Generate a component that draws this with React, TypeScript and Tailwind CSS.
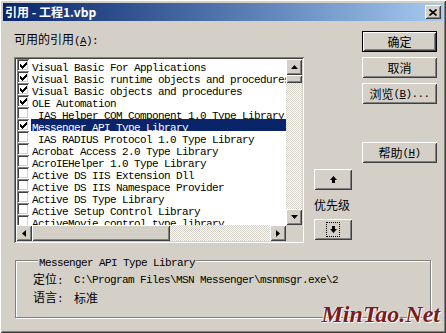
import type { ReactNode } from "react";

const raised =
  "shadow-[inset_1px_1px_#fff,inset_-1px_-1px_#404040,inset_2px_2px_#d4d0c8,inset_-2px_-2px_#808080]";
const sunken =
  "shadow-[inset_1px_1px_#808080,inset_-1px_-1px_#fff,inset_2px_2px_#404040,inset_-2px_-2px_#d4d0c8]";
const dither =
  "bg-[image:repeating-conic-gradient(#d4d0c8_0_25%,#fff_0_50%)] bg-[length:2px_2px]";

const refs = [
  { name: "Visual Basic For Applications", on: true },
  { name: "Visual Basic runtime objects and procedures", on: true },
  { name: "Visual Basic objects and procedures", on: true },
  { name: "OLE Automation", on: true },
  { name: " IAS Helper COM Component 1.0 Type Library", on: false },
  { name: "Messenger API Type Library", on: true, sel: true },
  { name: " IAS RADIUS Protocol 1.0 Type Library", on: false },
  { name: "Acrobat Access 2.0 Type Library", on: false },
  { name: "AcroIEHelper 1.0 Type Library", on: false },
  { name: "Active DS IIS Extension Dll", on: false },
  { name: "Active DS IIS Namespace Provider", on: false },
  { name: "Active DS Type Library", on: false },
  { name: "Active Setup Control Library", on: false },
  { name: "ActiveMovie control type library", on: false },
];

function Mono({ children, className = "" }: { children: ReactNode; className?: string }) {
  return (
    <span className={`whitespace-pre font-['Liberation_Mono',monospace] text-[11px] tracking-[-0.6px] ${className}`}>
      {children}
    </span>
  );
}

function Key({ k }: { k: string }) {
  return (
    <Mono>
      (<span className="underline underline-offset-[1px]">{k}</span>)
    </Mono>
  );
}

function Arrow({ dir }: { dir: "up" | "down" | "left" | "right" }) {
  const pts = {
    up: "3.5,0 7,4 0,4",
    down: "0,0 7,0 3.5,4",
    left: "4,0 4,7 0,3.5",
    right: "0,0 4,3.5 0,7",
  }[dir];
  const v = dir === "up" || dir === "down";
  return (
    <svg width={v ? 7 : 4} height={v ? 4 : 7} viewBox={v ? "0 0 7 4" : "0 0 4 7"}>
      <polygon points={pts} fill="#000" />
    </svg>
  );
}

function ScrollBtn({ dir }: { dir: "up" | "down" | "left" | "right" }) {
  return (
    <div className={`flex h-[16px] w-[16px] shrink-0 items-center justify-center bg-[#d4d0c8] ${raised}`}>
      <Arrow dir={dir} />
    </div>
  );
}

function CheckBox({ on }: { on: boolean }) {
  return (
    <div className={`ml-[1px] flex h-[12px] w-[12px] shrink-0 items-center justify-center bg-white ${sunken}`}>
      {on && (
        <svg width="7" height="7" viewBox="0 0 7 7">
          <path d="M0 2h1v1h1v1h1v-1h1v-1h1v-1h1v-1h1v3h-1v1h-1v1h-1v1h-1v1h-1v-1h-1v-1h-1z" fill="#000" />
        </svg>
      )}
    </div>
  );
}

function Button({ children, isDefault = false }: { children: ReactNode; isDefault?: boolean }) {
  return (
    <div
      className={`flex h-[21px] w-[75px] items-center justify-center bg-[#d4d0c8] ${
        isDefault ? "border border-black" : ""
      } ${raised}`}
    >
      {children}
    </div>
  );
}

function BigArrow({ down = false }: { down?: boolean }) {
  return (
    <svg width="7" height="7" viewBox="0 0 7 7" className={down ? "rotate-180" : ""}>
      <polygon points="3.5,0 7,4 5,4 5,7 2,7 2,4 0,4" fill="#000" />
    </svg>
  );
}

export default function App() {
  return (
    <div
      className={`relative h-[333px] w-[446px] overflow-hidden bg-[#d4d0c8] p-[3px] font-['Noto_Sans_CJK_SC',sans-serif] text-[12px] leading-[12px] text-black ${raised}`}
    >
      {/* 标题栏 */}
      <div className="flex h-[18px] items-center justify-between bg-linear-to-r from-[#0a246a] to-[#a6caf0] px-[2px]">
        <span className="font-bold text-white">引用 - 工程1.vbp</span>
        <div className={`flex h-[14px] w-[16px] items-center justify-center bg-[#d4d0c8] ${raised}`}>
          <svg width="8" height="7" viewBox="0 0 8 7">
            <path d="M0.5 0.5 7.5 6.5 M7.5 0.5 0.5 6.5" stroke="#000" strokeWidth="1.6" />
          </svg>
        </div>
      </div>

      <div className="flex pl-[11px]">
        {/* 引用列表 */}
        <div className="flex w-[290px] flex-col">
          <div className="mt-[12px] h-[12px]">
            可用的引用<Key k="A" />
            <Mono>:</Mono>
          </div>
          <div className={`mt-[12px] h-[186px] w-[290px] bg-white p-[2px] ${sunken}`}>
            <div className="flex h-full">
              <div className="flex w-[270px] flex-col">
                <div className="h-[166px] overflow-hidden">
                  {refs.map((r) => (
                    <div key={r.name} className="flex h-[12px] items-start">
                      <CheckBox on={r.on} />
                      <div
                        className={`ml-[2px] h-[12px] flex-1 pl-[1px] leading-[13px] ${
                          r.sel ? "bg-[#0a246a] text-white" : ""
                        }`}
                      >
                        <Mono>{r.name}</Mono>
                      </div>
                    </div>
                  ))}
                </div>
                <div className="flex h-[16px]">
                  <ScrollBtn dir="left" />
                  <div className={`w-[138px] bg-[#d4d0c8] ${raised}`} />
                  <div className={`flex-1 ${dither}`} />
                  <ScrollBtn dir="right" />
                </div>
              </div>
              <div className="flex w-[16px] flex-col">
                <ScrollBtn dir="up" />
                <div className={`h-[8px] bg-[#d4d0c8] ${raised}`} />
                <div className={`flex-1 ${dither}`} />
                <ScrollBtn dir="down" />
                <div className="h-[16px] bg-[#d4d0c8]" />
              </div>
            </div>
          </div>
        </div>

        {/* 优先级 */}
        <div className="ml-[10px] flex w-[38px] flex-col pt-[148px]">
          <div className={`flex h-[21px] items-center justify-center bg-[#d4d0c8] ${raised}`}>
            <BigArrow />
          </div>
          <div className="mt-[9px] h-[12px]">优先级</div>
          <div className={`mt-[8px] flex h-[21px] items-center justify-center bg-[#d4d0c8] ${raised}`}>
            <div className="flex h-[15px] w-[14px] items-center justify-center border border-dotted border-black">
              <BigArrow down />
            </div>
          </div>
        </div>

        {/* 按钮 */}
        <div className="ml-[10px] flex w-[75px] flex-col gap-[5px] pt-[10px]">
          <Button isDefault>确定</Button>
          <Button>取消</Button>
          <Button>
            浏览<Key k="B" />
            <Mono>...</Mono>
          </Button>
          <div className="mt-[33px]">
            <Button>
              帮助<Key k="H" />
            </Button>
          </div>
        </div>
      </div>

      {/* 详细信息 */}
      <fieldset className="mx-[12px] mt-[11px] border border-[#808080] pt-[5px] pb-[10px] pl-[17px] shadow-[inset_1px_1px_#fff,1px_1px_#fff]">
        <legend className="ml-[5px] h-[12px] bg-[#d4d0c8] px-[1px] leading-[13px]">
          <Mono>Messenger API Type Library</Mono>
        </legend>
        <div className="flex h-[18px] items-center">
          <span className="w-[41px]">
            定位<Mono>:</Mono>
          </span>
          <Mono>C:\Program Files\MSN Messenger\msnmsgr.exe\2</Mono>
        </div>
        <div className="flex h-[18px] items-center">
          <span className="w-[41px]">
            语言<Mono>:</Mono>
          </span>
          <span>标准</span>
        </div>
      </fieldset>

      <div className="absolute right-[6px] bottom-[7px] font-['Liberation_Serif',serif] text-[24px] leading-[24px] font-bold italic text-[#7a1c1c] [text-shadow:1px_1px_0_#fff,-1px_0_0_#eee]">
        MinTao.Net
      </div>
    </div>
  );
}
